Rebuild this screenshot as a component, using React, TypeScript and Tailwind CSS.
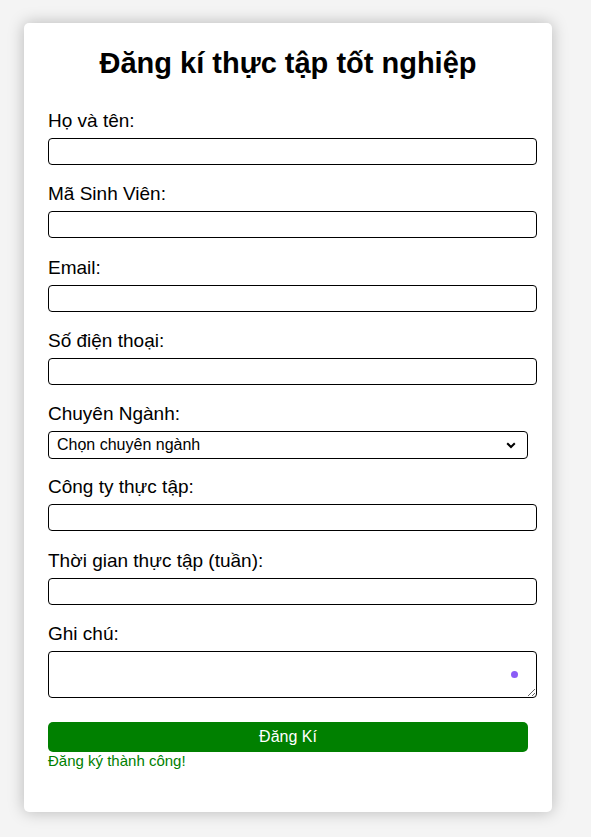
import React from 'react'

const fields = [
  { label: 'Họ và tên:', type: 'text' },
  { label: 'Mã Sinh Viên:', type: 'text' },
  { label: 'Email:', type: 'email' },
  { label: 'Số điện thoại:', type: 'tel' },
]

const fields2 = [
  { label: 'Công ty thực tập:', type: 'text' },
  { label: 'Thời gian thực tập (tuần):', type: 'number' },
]

function Field({ label, type }: { label: string; type: string }) {
  return (
    <div className="mb-[19.3px]">
      <label className="mb-[7px] block text-[19px] leading-[20px] text-black">{label}</label>
      <input
        type={type}
        className="block h-[27px] w-[489px] rounded-[4px] border border-black bg-white px-1 outline-none"
      />
    </div>
  )
}

export default function App() {
  return (
    <div
      className="min-h-[837px] bg-[#f4f4f4] pt-[23px] pl-[24px]"
      style={{ fontFamily: '"Liberation Sans", Arial, sans-serif' }}
    >
      <div className="h-[789px] w-[528px] rounded-[5px] bg-white px-[24px] pt-[24px] shadow-[0_0_16px_rgba(0,0,0,0.25)]">
        <h2 className="mb-[32px] text-center text-[29px] font-bold leading-[32px] text-black">
          Đăng kí thực tập tốt nghiệp
        </h2>
        <form onSubmit={(e) => e.preventDefault()}>
          {fields.map((f) => (
            <Field key={f.label} {...f} />
          ))}
          <div className="mb-[18.3px]">
            <label className="mb-[7px] block text-[19px] leading-[20px] text-black">Chuyên Ngành:</label>
            <div className="relative w-[480px]">
              <select className="block h-[28px] w-[480px] appearance-none rounded-[4px] border border-black bg-white pl-[8px] text-[16px] text-black outline-none">
                <option>Chọn chuyên ngành</option>
                <option>Công nghệ thông tin</option>
                <option>Kinh tế</option>
              </select>
              <svg
                className="pointer-events-none absolute top-[11px] right-[12px]"
                width="10"
                height="7"
                viewBox="0 0 10 7"
              >
                <path d="M1.2 1.2 L5 5 L8.8 1.2" fill="none" stroke="#000" strokeWidth="2" />
              </svg>
            </div>
          </div>
          {fields2.map((f) => (
            <Field key={f.label} {...f} />
          ))}
          <div className="mb-[24px]">
            <label className="mb-[7px] block text-[19px] leading-[20px] text-black">Ghi chú:</label>
            <div className="relative w-[489px]">
              <textarea className="block h-[47px] w-[489px] rounded-[4px] border border-black bg-white px-1 outline-none" />
              <span className="absolute top-[20px] right-[19px] h-[7px] w-[7px] rounded-full bg-[#8b5cf6]" />
            </div>
          </div>
          <button
            type="submit"
            className="block h-[30px] w-[480px] rounded-[5px] bg-[#008000] text-[16px] text-white"
          >
            Đăng Kí
          </button>
          <p className="text-[15px] leading-[18px] text-[#008000]">Đăng ký thành công!</p>
        </form>
      </div>
    </div>
  )
}
